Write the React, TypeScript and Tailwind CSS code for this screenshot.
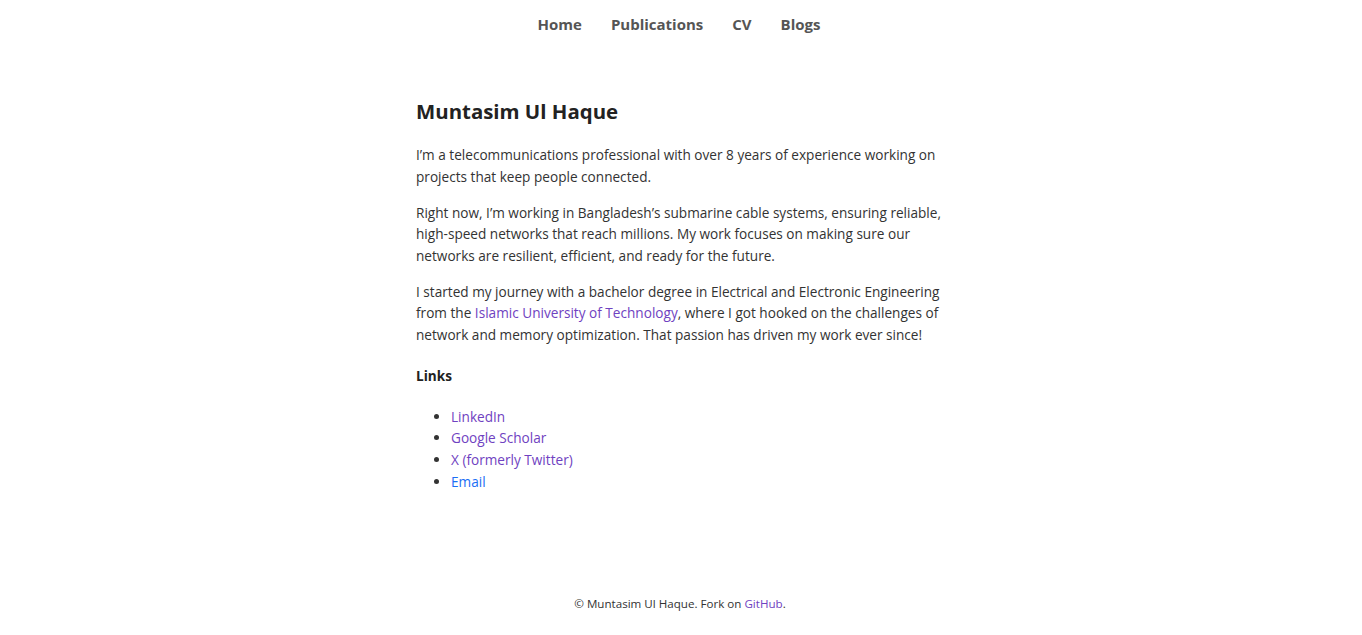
import React from 'react';

const navLinks = ['Home', 'Publications', 'CV', 'Blogs'];

const socialLinks = [
  { name: 'LinkedIn', visited: true },
  { name: 'Google Scholar', visited: true },
  { name: 'X (formerly Twitter)', visited: true },
  { name: 'Email', visited: false },
];

const App: React.FC = () => {
  return (
    <div className="min-h-screen flex flex-col bg-white text-[#333] font-['Open_Sans',sans-serif]">
      {/* Top nav */}
      <nav className="flex justify-center gap-[29px] pt-[12px] h-[58px] pr-[4px]">
        {navLinks.map((name) => (
          <a key={name} href="#" className="text-[15px] font-bold text-[#555] leading-[24px]">
            {name}
          </a>
        ))}
      </nav>

      {/* Main content */}
      <main className="w-[530px] mx-auto flex-1 pt-[38px] text-[13.62px] leading-[21.6px]">
        <h1 className="text-[20.4px] font-bold text-[#222] leading-[30px] mb-[18px]">Muntasim Ul Haque</h1>

        <p className="mb-[14.4px]">
          I’m a telecommunications professional with over 8 years of experience working on projects that keep people
          connected.
        </p>
        <p className="mb-[14.4px]">
          Right now, I’m working in Bangladesh’s submarine cable systems, ensuring reliable, high-speed networks that
          reach millions. My work focuses on making sure our networks are resilient, efficient, and ready for the future.
        </p>
        <p className="mb-[19px]">
          I started my journey with a bachelor degree in Electrical and Electronic Engineering from the{' '}
          <a href="#" className="text-[#6f42c1]">
            Islamic University of Technology
          </a>
          , where I got hooked on the challenges of network and memory optimization. That passion has driven my work ever
          since!
        </p>

        <h4 className="font-bold text-[#222] mb-[19.6px]">Links</h4>
        <ul className="list-disc pl-[35px] marker:text-[#333]">
          {socialLinks.map((link) => (
            <li key={link.name}>
              <a href="#" className={link.visited ? 'text-[#6f42c1]' : 'text-[#1a6ef5]'}>
                {link.name}
              </a>
            </li>
          ))}
        </ul>
      </main>

      {/* Footer */}
      <footer className="text-center text-[11.6px] leading-[18px] pb-[22px] pr-[2px] text-[#333]">
        © Muntasim Ul Haque. Fork on{' '}
        <a href="#" className="text-[#6f42c1]">
          GitHub
        </a>
        .
      </footer>
    </div>
  );
};

export default App;
